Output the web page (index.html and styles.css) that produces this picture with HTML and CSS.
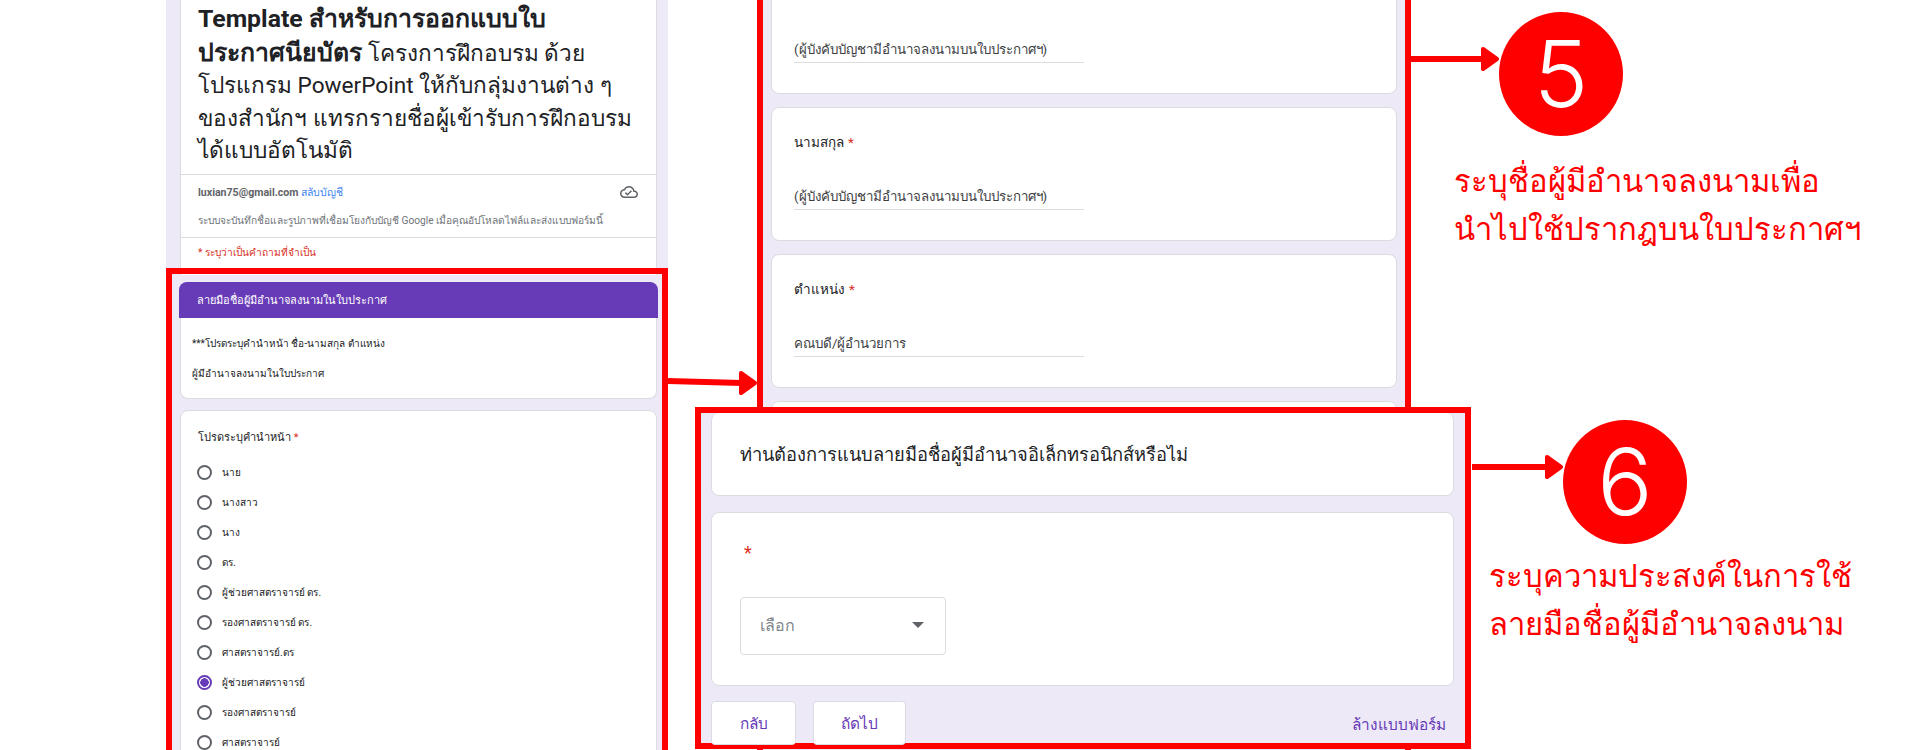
FILE: index.html
```html
<!DOCTYPE html>
<html lang="th">
<head>
    <meta charset="UTF-8">
    <meta name="viewport" content="width=device-width, initial-scale=1.0">
    <title>คู่มือกรอกแบบฟอร์ม</title>
    <link rel="stylesheet" href="styles.css">
</head>
<body>
    <div class="canvas">
        <!-- left screenshot -->
        <div class="shot shot-left">
            <div class="card head-card">
                <h1 class="form-title"><b>Template สำหรับการออกแบบใบ<br>ประกาศนียบัตร</b> โครงการฝึกอบรม ด้วย<br>โปรแกรม PowerPoint ให้กับกลุ่มงานต่าง ๆ<br>ของสำนักฯ แทรกรายชื่อผู้เข้ารับการฝึกอบรม<br>ได้แบบอัตโนมัติ</h1>
                <div class="account">
                    <div class="account-row">
                        <span><b>luxian75@gmail.com</b> <a class="switch">สลับบัญชี</a></span>
                        <svg class="cloud" viewBox="0 0 24 24"><path d="M19.35 10.04C18.67 6.59 15.64 4 12 4 9.11 4 6.6 5.64 5.35 8.04 2.34 8.36 0 10.91 0 14c0 3.31 2.69 6 6 6h13c2.76 0 5-2.24 5-5 0-2.64-2.05-4.78-4.65-4.96zM19 18H6c-2.21 0-4-1.79-4-4 0-2.05 1.53-3.76 3.56-3.97l1.07-.11.5-.95C8.08 7.14 9.94 6 12 6c2.62 0 4.88 1.86 5.39 4.43l.3 1.5 1.53.11c1.56.1 2.78 1.41 2.78 2.96 0 1.65-1.35 3-3 3zm-9-3.82l-2.09-2.09L6.5 13.5 10 17l6.01-6.01-1.41-1.41z"/></svg>
                    </div>
                    <p class="account-note">ระบบจะบันทึกชื่อและรูปภาพที่เชื่อมโยงกับบัญชี Google เมื่อคุณอัปโหลดไฟล์และส่งแบบฟอร์มนี้</p>
                </div>
                <p class="required-note">* ระบุว่าเป็นคำถามที่จำเป็น</p>
            </div>

            <div class="section-card">
                <div class="section-bar">ลายมือชื่อผู้มีอำนาจลงนามในใบประกาศ</div>
                <div class="section-body">
                    <p>***โปรดระบุคำนำหน้า ชื่อ-นามสกุล ตำแหน่ง</p>
                    <p>ผู้มีอำนาจลงนามในใบประกาศ</p>
                </div>
            </div>

            <div class="card radio-card">
                <div class="radio-label">โปรดระบุคำนำหน้า <span class="req">*</span></div>
                <div class="radio-list">
                    <div class="radio-row"><i class="radio"></i>นาย</div>
                    <div class="radio-row"><i class="radio"></i>นางสาว</div>
                    <div class="radio-row"><i class="radio"></i>นาง</div>
                    <div class="radio-row"><i class="radio"></i>ดร.</div>
                    <div class="radio-row"><i class="radio"></i>ผู้ช่วยศาสตราจารย์ ดร.</div>
                    <div class="radio-row"><i class="radio"></i>รองศาสตราจารย์ ดร.</div>
                    <div class="radio-row"><i class="radio"></i>ศาสตราจารย์.ดร</div>
                    <div class="radio-row"><i class="radio checked"></i>ผู้ช่วยศาสตราจารย์</div>
                    <div class="radio-row"><i class="radio"></i>รองศาสตราจารย์</div>
                    <div class="radio-row"><i class="radio"></i>ศาสตราจารย์</div>
                </div>
            </div>
            <div class="frame frame-left"></div>
        </div>

        <!-- middle screenshot -->
        <div class="shot shot-mid">
            <div class="card field-card">
                <div class="field-label">ชื่อ <span class="req">*</span></div>
                <div class="field-input">(ผู้บังคับบัญชามีอำนาจลงนามบนใบประกาศฯ)</div>
            </div>
            <div class="card field-card">
                <div class="field-label">นามสกุล <span class="req">*</span></div>
                <div class="field-input">(ผู้บังคับบัญชามีอำนาจลงนามบนใบประกาศฯ)</div>
            </div>
            <div class="card field-card">
                <div class="field-label">ตำแหน่ง <span class="req">*</span></div>
                <div class="field-input">คณบดี/ผู้อำนวยการ</div>
            </div>
            <div class="card field-card"></div>
        </div>

        <!-- lower screenshot, sits on top of the middle one -->
        <div class="shot-low">
            <div class="card low-title">ท่านต้องการแนบลายมือชื่อผู้มีอำนาจอิเล็กทรอนิกส์หรือไม่</div>
            <div class="card low-select">
                <div class="req">*</div>
                <div class="select-box">
                    <span>เลือก</span>
                    <i class="select-arrow"></i>
                </div>
            </div>
            <div class="form-actions">
                <button class="btn btn-back">กลับ</button>
                <button class="btn btn-next">ถัดไป</button>
                <a class="clear-link">ล้างแบบฟอร์ม</a>
            </div>
        </div>

        <!-- callouts -->
        <svg class="arrows" viewBox="0 0 1920 750">
            <g fill="#ff0000" stroke="#ff0000">
                <path d="M668 381 L742 383" stroke-width="6" fill="none"/>
                <path d="M741 373 L755 383 L741 393 Z" stroke-width="4" stroke-linejoin="round"/>
                <path d="M1411 59 H1484" stroke-width="6" fill="none"/>
                <path d="M1483 49 L1497 59 L1483 69 Z" stroke-width="4" stroke-linejoin="round"/>
                <path d="M1472 467 H1546" stroke-width="6" fill="none"/>
                <path d="M1547 457 L1561 467 L1547 477 Z" stroke-width="4" stroke-linejoin="round"/>
            </g>
        </svg>

        <div class="badge badge-five">5</div>
        <div class="callout callout-five">ระบุชื่อผู้มีอำนาจลงนามเพื่อ<br>นำไปใช้ปรากฎบนใบประกาศฯ</div>

        <div class="badge badge-six">6</div>
        <div class="callout callout-six">ระบุความประสงค์ในการใช้<br>ลายมือชื่อผู้มีอำนาจลงนาม</div>
    </div>
</body>
</html>
```

FILE: styles.css
```css
* {
    box-sizing: border-box;
}
body {
    margin: 0;
    background-color: #fff;
    font-family: Roboto, "Noto Sans", "Liberation Sans", sans-serif;
    color: #202124;
}
p {
    margin: 0;
}
.canvas {
    position: relative;
    width: 1920px;
    height: 750px;
    overflow: hidden;
}
.card {
    background-color: #fff;
    border: 1px solid #dadce0;
    border-radius: 8px;
}
.req {
    color: #d93025;
}

/* left screenshot */
.shot {
    position: absolute;
    background-color: #ede9f7;
}
.shot-left {
    left: 166px;
    top: -30px;
    width: 502px;
    height: 780px;
    padding: 0 11px 0 14px;
}
.head-card {
    height: 305px;
    border-radius: 0;
    border-top: none;
    border-bottom: none;
}
.form-title {
    margin: 0;
    padding: 33px 0 0 17px;
    height: 204px;
    font-size: 22.6px;
    line-height: 32.5px;
    font-weight: 400;
    white-space: nowrap;
    color: #202124;
}
.form-title b {
    font-size: 24.8px;
}
.account {
    border-top: 1px solid #dadce0;
    border-bottom: 1px solid #dadce0;
    height: 64px;
    padding: 0 17px;
}
.account-row {
    display: flex;
    justify-content: space-between;
    align-items: center;
    padding-top: 8px;
    padding-right: 1px;
    font-size: 10.6px;
    color: #5f6368;
}
.switch {
    color: #4285f4;
}
.cloud {
    width: 18px;
    height: 18px;
    fill: #5f6368;
}
.account-note {
    margin-top: 11px;
    font-size: 10.2px;
    color: #70757a;
}
.required-note {
    padding: 6px 17px;
    font-size: 10.2px;
    color: #d93025;
}
.section-card {
    margin-top: 7px;
}
.section-bar {
    margin: 0 -1px;
    height: 36px;
    padding: 0 18px;
    display: flex;
    align-items: center;
    background-color: #673ab7;
    color: #fff;
    font-size: 11px;
    border-radius: 8px 8px 0 0;
}
.section-body {
    height: 81px;
    padding: 18px 11px 0 11px;
    background-color: #fff;
    border: 1px solid #dadce0;
    border-top: none;
    border-radius: 0 0 8px 8px;
    font-size: 10px;
}
.section-body p {
    height: 30px;
}
.radio-card {
    margin-top: 11px;
    height: 400px;
    padding: 17px 17px 0 17px;
}
.radio-label {
    font-size: 11px;
}
.radio-list {
    margin-top: 11px;
    margin-left: -1px;
}
.radio-row {
    height: 30px;
    display: flex;
    align-items: center;
    gap: 10px;
    font-size: 10px;
}
.radio {
    width: 15px;
    height: 15px;
    border: 2px solid #5f6368;
    border-radius: 50%;
}
.radio.checked {
    border-color: #673ab7;
    background: radial-gradient(circle, #673ab7 0 4px, transparent 4.5px);
}
.frame {
    position: absolute;
    border: 6px solid #ff0000;
}
.frame-left {
    left: 0;
    right: 0;
    top: 298px;
    height: 500px;
}

/* middle screenshot */
.shot-mid {
    left: 757px;
    top: -54px;
    width: 654px;
    height: 820px;
    padding: 14px 8px 0 8px;
    border-left: 6px solid #ff0000;
    border-right: 6px solid #ff0000;
    display: flex;
    flex-direction: column;
    gap: 13px;
}
.field-card {
    flex: none;
    height: 134px;
    padding: 21px 22px 0 22px;
}
.field-label {
    font-size: 13.5px;
    height: 26px;
    display: flex;
    align-items: center;
    gap: 4px;
}
.field-input {
    width: 290px;
    height: 40px;
    margin-top: 15px;
    padding-bottom: 2px;
    display: flex;
    align-items: flex-end;
    font-size: 13.3px;
    border-bottom: 1px solid #dadce0;
    color: #3c4043;
}

/* lower screenshot */
.shot-low {
    position: absolute;
    left: 695px;
    top: 407px;
    width: 776px;
    height: 342px;
    padding: 0 11px 0 10px;
    background-color: #ede9f7;
    border: 6px solid #ff0000;
}
.low-title {
    height: 83px;
    padding: 0 28px;
    display: flex;
    align-items: center;
    font-size: 18.3px;
    border-top: none;
}
.low-select {
    margin-top: 16px;
    height: 174px;
    padding: 29px 28px 0 28px;
}
.low-select .req {
    height: 55px;
    margin-left: 4px;
    font-size: 18px;
}
.select-box {
    width: 206px;
    height: 58px;
    padding: 0 21px 2px 19px;
    display: flex;
    justify-content: space-between;
    align-items: center;
    border: 1px solid #dadce0;
    border-radius: 4px;
    font-size: 16px;
    color: #80868b;
}
.select-arrow {
    border-left: 6px solid transparent;
    border-right: 6px solid transparent;
    border-top: 6px solid #5f6368;
}
.form-actions {
    margin-top: 15px;
    display: flex;
    align-items: flex-start;
}
.btn {
    height: 44px;
    background-color: #fff;
    border: 1px solid #dadce0;
    border-radius: 4px;
    font-family: inherit;
    font-size: 15.4px;
    font-weight: 500;
    color: #673ab7;
}
.btn-back {
    width: 85px;
}
.btn-next {
    width: 93px;
    margin-left: 17px;
}
.clear-link {
    margin-left: auto;
    margin-right: 8px;
    padding-top: 11px;
    font-size: 15.4px;
    font-weight: 500;
    color: #673ab7;
}

/* callouts */
.arrows {
    position: absolute;
    left: 0;
    top: 0;
    width: 1920px;
    height: 750px;
}
.badge {
    position: absolute;
    width: 124px;
    height: 124px;
    border-radius: 50%;
    background-color: #ff0000;
    color: #fff;
    display: flex;
    align-items: center;
    justify-content: center;
    font-family: Inter, sans-serif;
    font-size: 92px;
    font-weight: 300;
    line-height: 1;
}
.badge-five {
    left: 1499px;
    top: 12px;
}
.badge-six {
    left: 1563px;
    top: 420px;
}
.callout {
    position: absolute;
    color: #ff0000;
    font-family: "Noto Sans", "Open Sans", sans-serif;
    font-size: 31px;
    line-height: 48px;
    white-space: nowrap;
}
.callout-five {
    left: 1454px;
    top: 156px;
}
.callout-six {
    left: 1489px;
    top: 551px;
}
```
